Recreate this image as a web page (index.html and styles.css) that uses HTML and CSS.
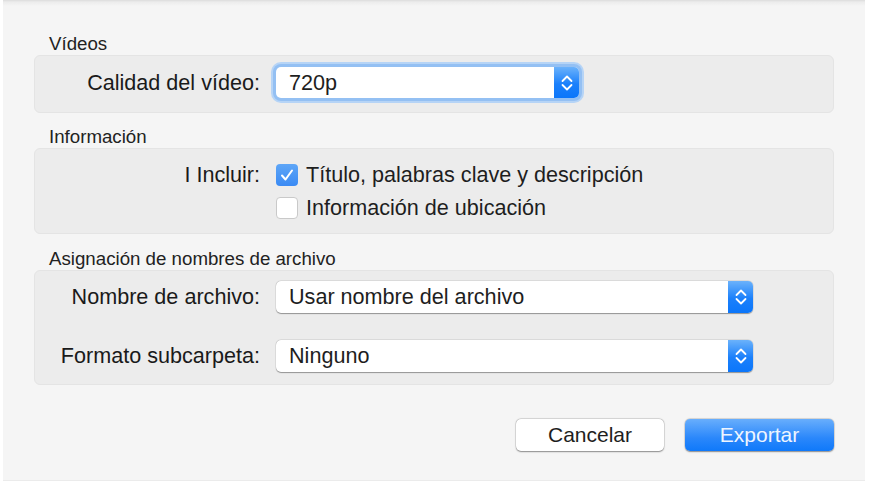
FILE: index.html
```html
<!DOCTYPE html>
<html lang="es">
<head>
    <meta charset="UTF-8">
    <title>Exportar</title>
    <link rel="stylesheet" href="styles.css">
</head>
<body>

<div class="window">

    <div class="section-title">Vídeos</div>
    <div class="group group-video">
        <div class="row">
            <div class="row-label">Calidad del vídeo:</div>
            <div class="popup popup-short focused">
                <span class="popup-value">720p</span>
                <span class="stepper">
                    <svg width="14" height="20" viewBox="0 0 14 20"><path d="M2.5 8 L7 3.5 L11.5 8 M2.5 12 L7 16.5 L11.5 12" fill="none" stroke="#fff" stroke-width="1.8" stroke-linecap="round" stroke-linejoin="round"/></svg>
                </span>
            </div>
        </div>
    </div>

    <div class="section-title">Información</div>
    <div class="group group-info">
        <div class="row">
            <div class="row-label">I Incluir:</div>
            <label class="check">
                <span class="box checked">
                    <svg width="22" height="22" viewBox="0 0 22 22"><path d="M6 11.5 L9.5 15.5 L16 6.5" fill="none" stroke="#fff" stroke-width="2" stroke-linecap="round" stroke-linejoin="round"/></svg>
                </span>
                Título, palabras clave y descripción
            </label>
        </div>
        <div class="row">
            <div class="row-label"></div>
            <label class="check">
                <span class="box"></span>
                Información de ubicación
            </label>
        </div>
    </div>

    <div class="section-title">Asignación de nombres de archivo</div>
    <div class="group group-files">
        <div class="row">
            <div class="row-label">Nombre de archivo:</div>
            <div class="popup popup-wide">
                <span class="popup-value">Usar nombre del archivo</span>
                <span class="stepper">
                    <svg width="14" height="20" viewBox="0 0 14 20"><path d="M2.5 8 L7 3.5 L11.5 8 M2.5 12 L7 16.5 L11.5 12" fill="none" stroke="#fff" stroke-width="1.8" stroke-linecap="round" stroke-linejoin="round"/></svg>
                </span>
            </div>
        </div>
        <div class="row">
            <div class="row-label">Formato subcarpeta:</div>
            <div class="popup popup-wide">
                <span class="popup-value">Ninguno</span>
                <span class="stepper">
                    <svg width="14" height="20" viewBox="0 0 14 20"><path d="M2.5 8 L7 3.5 L11.5 8 M2.5 12 L7 16.5 L11.5 12" fill="none" stroke="#fff" stroke-width="1.8" stroke-linecap="round" stroke-linejoin="round"/></svg>
                </span>
            </div>
        </div>
    </div>

    <div class="buttons">
        <button class="btn">Cancelar</button>
        <button class="btn btn-primary">Exportar</button>
    </div>

</div>

</body>
</html>
```

FILE: styles.css
```css
body {
    margin: 0;
    background: #ffffff;
    font-family: "Liberation Sans", Arial, sans-serif;
    color: #1f1f1f;
}

.window {
    margin-left: 3px;
    width: 862px;
    height: 481px;
    box-sizing: border-box;
    padding: 34px 31px 0 31px;
    background: linear-gradient(to bottom, #dcdcdc 0px, #ececec 2px, #f5f5f5 6px, #f5f5f5 100%);
    border-bottom: 1px solid #ebebeb;
}

.section-title {
    height: 21px;
    line-height: 20px;
    padding-left: 15px;
    font-size: 18.7px;
    color: #222;
}

.group {
    background: #ececec;
    border: 1px solid #e4e4e4;
    border-radius: 6px;
    box-sizing: border-box;
    margin-bottom: 14px;
}

.group-video {
    height: 58px;
    padding-top: 11px;
}

.group-info {
    height: 86px;
    padding-top: 15px;
    margin-bottom: 15px;
    display: flex;
    flex-direction: column;
    gap: 11px;
}

.group-info .row {
    height: 22px;
}

.group-files {
    height: 115px;
    padding-top: 10px;
    display: flex;
    flex-direction: column;
    gap: 27px;
}

.row {
    display: flex;
    align-items: center;
}

.row-label {
    width: 225px;
    flex-shrink: 0;
    text-align: right;
    font-size: 21.6px;
    color: #1a1a1a;
    margin-right: 16px;
}

/* popup menus */
.popup {
    height: 32px;
    box-sizing: border-box;
    display: flex;
    align-items: center;
    background: #fff;
    border-radius: 5px;
    box-shadow: 0 0.5px 1px rgba(0, 0, 0, 0.35), 0 0 0 0.5px rgba(0, 0, 0, 0.08);
    font-size: 21.6px;
    color: #1e1e1e;
}

.popup-short {
    width: 303px;
    height: 31px;
}

.popup-wide {
    width: 477px;
}

.popup.focused {
    box-shadow: 0 0 0 3px #94c0f3, 0 0 0 5px #b6d4f6;
}

.popup-value {
    flex: 1;
    padding-left: 13px;
}

.stepper {
    width: 25px;
    height: 100%;
    display: flex;
    align-items: center;
    justify-content: center;
    border-radius: 0 5px 5px 0;
    background: linear-gradient(to bottom, #6bb2fb, #1b80fb 55%, #0b76fa);
}

/* checkboxes */
.check {
    display: flex;
    align-items: center;
    height: 22px;
    font-size: 21.6px;
    color: #1e1e1e;
}

.box {
    width: 22px;
    height: 22px;
    box-sizing: border-box;
    border-radius: 4px;
    background: #fff;
    border: 1px solid #c9c9c9;
    margin-right: 8px;
    display: flex;
}

.box.checked {
    border: none;
    background: linear-gradient(to bottom, #5ea6f7, #3a8af4);
}

/* buttons */
.buttons {
    display: flex;
    justify-content: flex-end;
    gap: 21px;
    margin-top: 34px;
}

.btn {
    width: 148px;
    height: 32px;
    border: none;
    border-radius: 5px;
    background: #fff;
    box-shadow: 0 0.5px 1.5px rgba(0, 0, 0, 0.4), 0 0 0 0.5px rgba(0, 0, 0, 0.12);
    font-family: "Liberation Sans", Arial, sans-serif;
    font-size: 21px;
    color: #1e1e1e;
}

.btn-primary {
    width: 149px;
    color: #eef5ff;
    background: linear-gradient(to bottom, #68aefc, #2a87fb 60%, #0f79fa);
}
```
